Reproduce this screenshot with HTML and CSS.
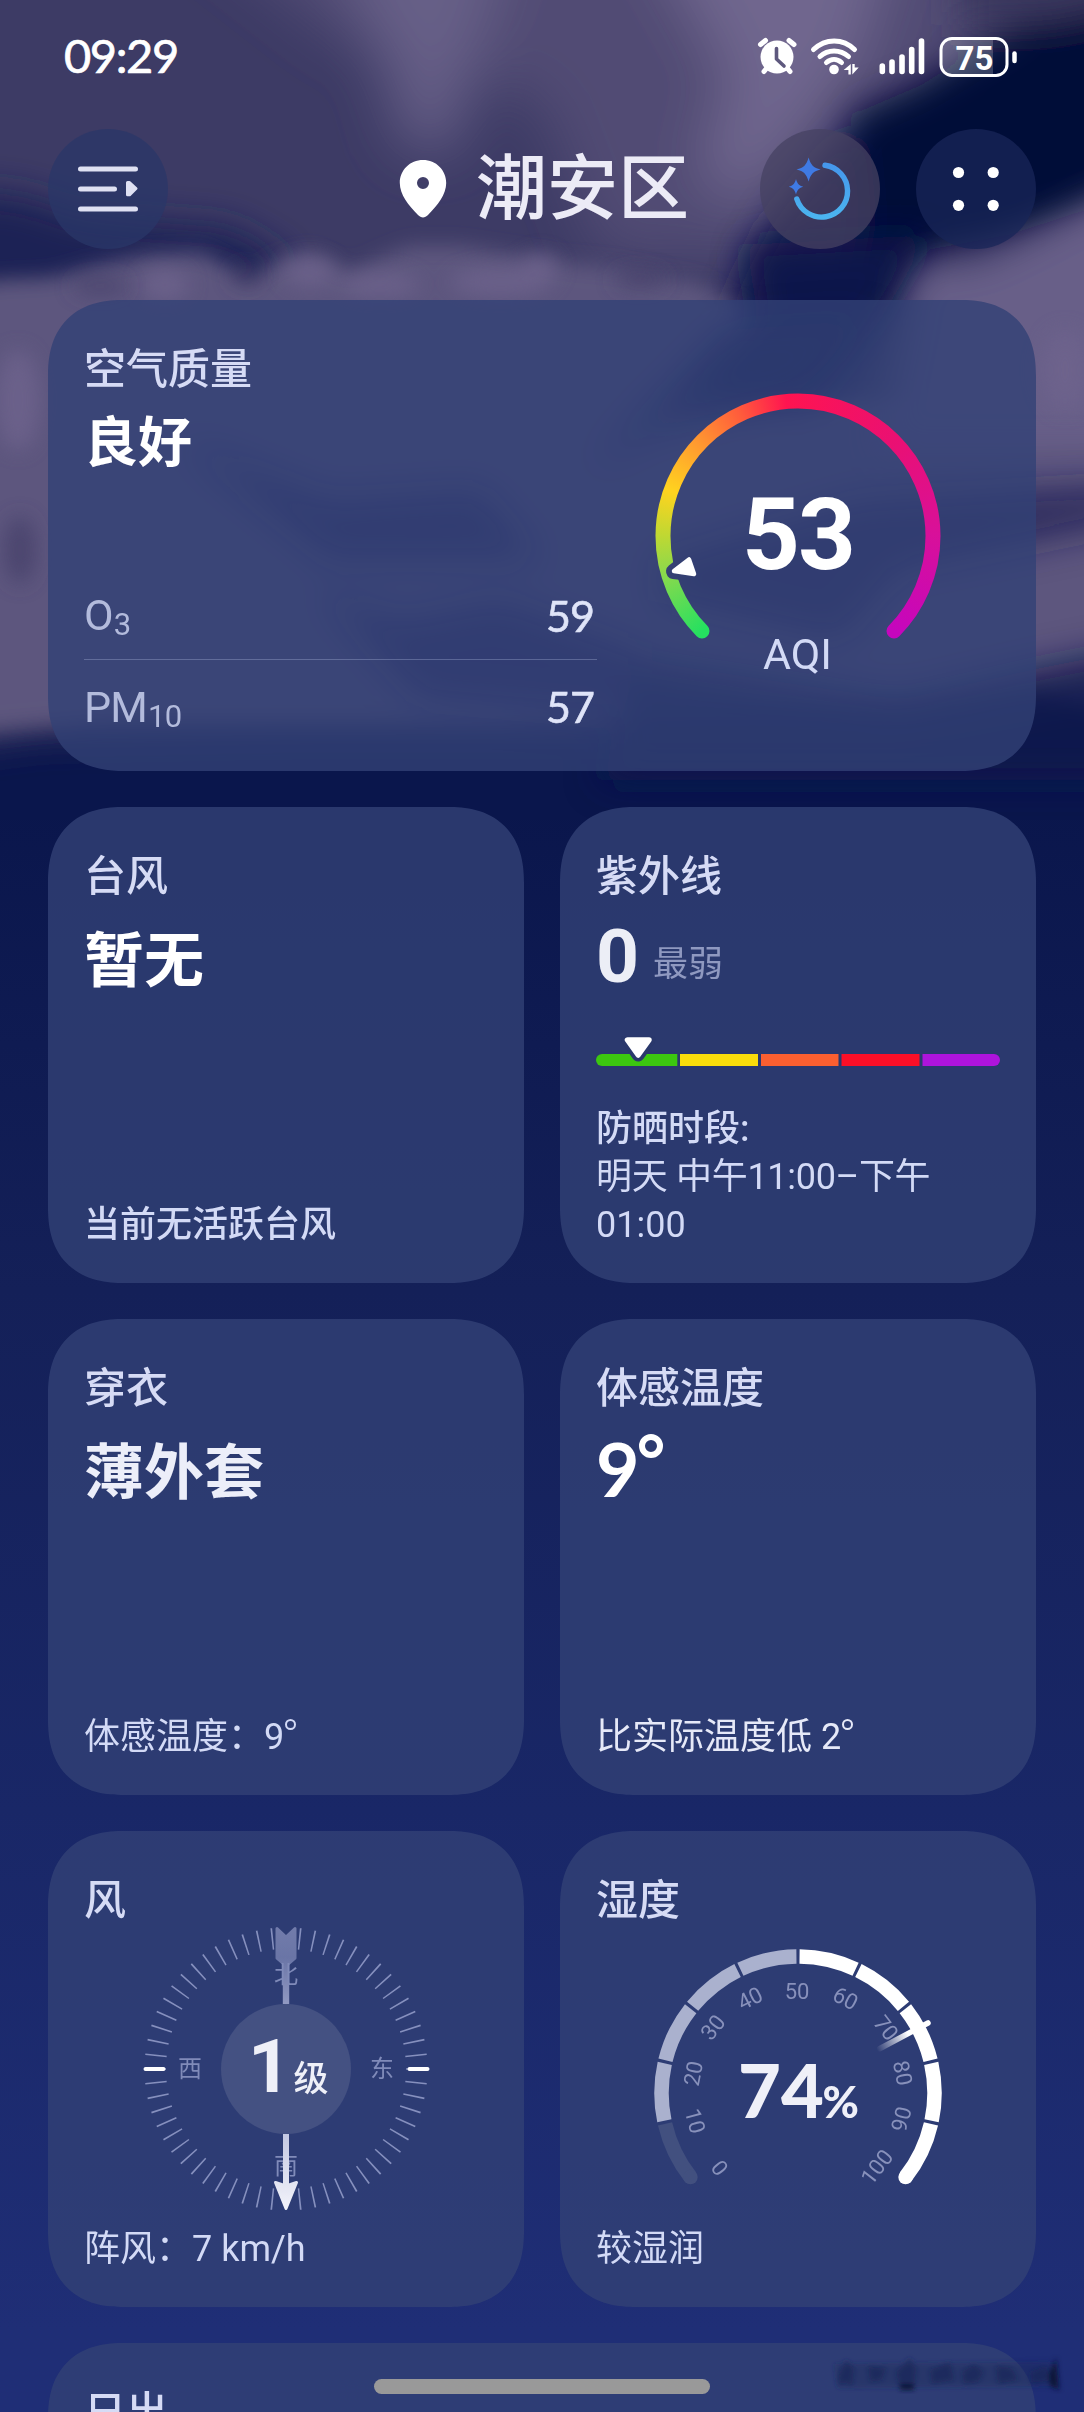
FILE: index.html
```html
<!DOCTYPE html>
<html lang="zh-CN">
<head>
<meta charset="utf-8">
<title>潮安区 天气</title>
<link rel="stylesheet" href="styles.css">
</head>
<body>
<div class="screen">
  <svg class="sky" viewBox="0 0 1084 820" width="1084" height="820" aria-hidden="true">
    <defs>
      <filter id="b18" filterUnits="userSpaceOnUse" x="-200" y="-200" width="1500" height="1200"><feGaussianBlur stdDeviation="18"/></filter>
      <filter id="b30" filterUnits="userSpaceOnUse" x="-200" y="-200" width="1500" height="1200"><feGaussianBlur stdDeviation="28"/></filter>
      <filter id="b12" filterUnits="userSpaceOnUse" x="-200" y="-200" width="1500" height="1200"><feGaussianBlur stdDeviation="10"/></filter>
    </defs>
    <rect width="1084" height="820" fill="#0a164c"/>
    <path filter="url(#b18)" fill="#3d3b65" d="M-100-100H1184V690L1060 700 900 730H300L40 735-100 755Z"/>
    <g filter="url(#b30)">
      <path fill="#555078" d="M160-100H1000V30L800 260H600L540 100 340 40Z" opacity=".8"/>
      <path fill="#6b638b" d="M330-80L520-80 480 40 455 150 405 150 380 60Z" opacity=".85"/>
      <path fill="#6f668e" d="M640-80L900-80 860 60 790 150 730 210 700 160 730 80Z"/>
    </g>
    <g filter="url(#b18)">
      <path fill="#1c2054" d="M-80 190L20 195 80 215 150 222 230 228 290 262 250 300-80 310Z"/>
      <path fill="#1c1c50" d="M770 225L850 130 900 300 720 330Z"/>
      <path fill="#010739" d="M1010 30L1100 0 1180-10V180L1010 235 930 250 890 300 840 320 860 220 850 115 920 85Z"/>
      <path fill="#3b385f" d="M960-80H1180V-10L1060 20 960 25Z"/>
    </g>
    <path filter="url(#b12)" fill="#5d567e" d="M-60 292L0 280 50 278 100 264 150 254 200 252 232 268 250 282 275 262 310 252 350 272 385 256 410 246 460 246 500 252 560 262 620 268 700 284 745 310 780 400 1160 400 1160 720 1030 690 900 700 500 720 100 720-60 735Z"/>
    <path filter="url(#b18)" fill="#10154c" d="M745 245L930 235 880 320 820 400 690 400 760 320Z"/>
    <path filter="url(#b18)" fill="#675e88" d="M905 330L915 268 980 262 1030 238 1160 170V450H880Z"/>
    <g filter="url(#b12)" fill="#6e648d" opacity=".8">
      <ellipse cx="165" cy="285" rx="24" ry="16"/><ellipse cx="310" cy="272" rx="26" ry="14"/><ellipse cx="380" cy="285" rx="40" ry="12"/><ellipse cx="500" cy="282" rx="50" ry="14"/><ellipse cx="540" cy="268" rx="18" ry="14"/><ellipse cx="18" cy="400" rx="22" ry="50"/><ellipse cx="1065" cy="370" rx="24" ry="40"/>
    </g>
    <g filter="url(#b12)" fill="#3f3b65" opacity=".6">
      <ellipse cx="100" cy="286" rx="28" ry="9"/><ellipse cx="245" cy="276" rx="14" ry="10"/><ellipse cx="640" cy="280" rx="26" ry="9"/><ellipse cx="20" cy="550" rx="16" ry="34"/>
    </g>
    <g filter="url(#b18)">
      <path fill="#10164f" d="M730 330L870 320 800 390 650 430 590 470Z" opacity=".8"/>
      <path fill="#1b1f58" d="M180 440L330 500 480 490 540 560 330 560Z" opacity=".7"/>
      <path fill="#171b52" d="M660 560L860 500 1180 480V512L900 570 840 640 660 600Z" opacity=".7"/>
      <path fill="#1b1f58" d="M320 590L400 620 500 600 640 650 640 720 420 700Z" opacity=".7"/>
      <path fill="#0b164c" d="M640 660L900 700 1030 670 1180 640V780H600Z" opacity=".85"/>
    </g>
  </svg>

  <header class="status">
    <span class="clock">09:29</span>
    <svg class="status-icons" width="262" height="42" viewBox="757 36 262 42" fill="none" stroke="#fff" stroke-linecap="round" stroke-linejoin="round">
      <path stroke-width="5" d="M760.5 44.5l5-4M794 44.5l-5-4M764 71.5l4-5M790 71.5l-4-5"/>
      <circle cx="777" cy="57" r="16.5" fill="#fff" stroke="none"/>
      <path stroke="#5e587e" stroke-width="3.6" d="M776.5 48.5v10.500l7.500 7"/>
      <path stroke-width="5" d="M813.500 49.500c12-11.500 29.500-11.500 41 0M820 56.500c8-7.500 20-7.500 28.500 0M826.500 62.500c4.500-4 10.500-4 15 0"/>
      <circle cx="834" cy="69.500" r="4.800" fill="#fff" stroke="none"/>
      <path fill="#fff" stroke="none" d="M850.800 64v10.500h-2.400v-4.500h-4.700zM852.300 74.500v-10.500h2.400v3.500h4z"/>
      <path stroke-width="5.600" d="M882.300 66v5.500M892 62v9.500M902 57v14.500M911.700 49.500v22M921.500 41v30.500"/>
      <path fill="#fff" fill-opacity=".2" stroke="none" d="M951 38.500h42v37h-42a10 10 0 0 1-10-10v-17a10 10 0 0 1 10-10z"/>
      <rect x="941" y="38.500" width="66" height="37" rx="11" stroke-width="3"/>
      <path stroke-width="4.500" d="M1014.500 53.500v7.500"/>
      <text class="battery" x="974.500" y="69.500" text-anchor="middle">75</text>
    </svg>
  </header>

  <nav class="topbar">
    <div class="round round-menu">
      <svg width="62" height="48" viewBox="77 165 62 48" fill="none" stroke="#dfe1f3" stroke-width="5" stroke-linecap="round">
        <path d="M80.500 169H135.500M80.500 189H114.500M80.500 209H135.500"/>
        <path fill="#dfe1f3" stroke-width="3" stroke-linejoin="round" d="M127.500 182.500h2l6.500 6-6.500 6.300h-2z"/>
      </svg>
    </div>
    <div class="place">
      <svg width="48" height="60" viewBox="399 160 48 60"><path fill="#fff" fill-rule="evenodd" d="M423 161c13 0 23.200 10 23.200 23 0 11.500-8.700 22.500-18.200 32-3.200 3.200-6.800 3.200-10 0-9.500-9.500-18.200-20.500-18.200-32 0-13 10.200-23 23.200-23zM423 178a6 6 0 1 0 0 12 6 6 0 0 0 0-12z"/></svg>
      <h1>潮安区</h1>
    </div>
    <div class="round round-ai">
      <svg width="64" height="68" viewBox="788 155 64 68">
        <defs><linearGradient id="ai" x1="0" y1="0" x2="0" y2="1"><stop offset="0" stop-color="#4597ec"/><stop offset="1" stop-color="#4bb4ef"/></linearGradient></defs>
        <path fill="none" stroke="url(#ai)" stroke-width="5.400" stroke-linecap="round" d="M825 165.300A26 26 0 1 1 796.800 199"/>
        <path fill="#3f7ae4" d="M808.600 157.500c2 7.500 5 10.200 12 12-7 1.800-10 4.500-12 12-2-7.500-5-10.200-12-12 7-1.800 10-4.500 12-12zM796 179c1.300 4.700 3 6.500 7.300 7.800-4.300 1.300-6 3-7.300 7.700-1.300-4.700-3-6.400-7.300-7.700 4.300-1.300 6-3.100 7.300-7.800z"/>
      </svg>
    </div>
    <div class="round round-more">
      <svg width="48" height="46" viewBox="-24 -23 48 46" fill="#fff"><circle cx="-17.500" cy="-16.500" r="5.600"/><circle cx="17.200" cy="-16.500" r="5.600"/><circle cx="-17.500" cy="16.300" r="5.600"/><circle cx="17.200" cy="16.300" r="5.600"/></svg>
    </div>
  </nav>

  <main class="cards">
    <section class="card air">
      <div class="air-info">
        <h2>空气质量</h2>
        <p class="value air-level">良好</p>
        <dl>
          <div class="row"><dt>O<sub>3</sub></dt><dd>59</dd></div>
          <div class="row"><dt>PM<sub>10</sub></dt><dd>57</dd></div>
        </dl>
      </div>
      <svg class="aqi" width="290" height="290" viewBox="-145 -145 290 290">
        <mask id="ring" maskUnits="userSpaceOnUse" x="-145" y="-145" width="290" height="290">
          <path d="M-96 96A135 135 0 1 1 96 96" fill="none" stroke="#fff" stroke-width="15" stroke-linecap="round"/>
          <path d="M-124.500 36.500L-108.500 24-103.500 39Z" fill="#000" stroke="#000" stroke-width="15" stroke-linejoin="round"/>
        </mask>
        <g mask="url(#ring)"><foreignObject x="-145" y="-145" width="290" height="290"><div class="spectrum"></div></foreignObject></g>
        <path d="M-124 36L-109 24.500-104 39Z" fill="#fff" stroke="#fff" stroke-width="4.500" stroke-linejoin="round"/>
        <text class="aqi-num" x="0" y="33.500" text-anchor="middle">53</text>
        <text class="aqi-label" x="-.5" y="133.500" text-anchor="middle">AQI</text>
      </svg>
    </section>

    <section class="card">
      <h2>台风</h2>
      <p class="value">暂无</p>
      <p class="note medium">当前无活跃台风</p>
    </section>

    <section class="card">
      <h2>紫外线</h2>
      <p class="value figure dim">0<span class="level">最弱</span></p>
      <svg class="uvbar" width="404" height="34" viewBox="0 0 404 34">
        <path fill="#3cc710" d="M6 18h75.300v12H6a6 6 0 0 1 0-12z"/>
        <path fill="#fadd0b" d="M84 18h78v12H84z"/><path fill="#fb5f30" d="M165 18h77.500v12H165z"/><path fill="#fb0f27" d="M245.500 18h78v12h-78z"/>
        <path fill="#ae14dc" d="M326.500 18H398a6 6 0 0 1 0 12h-71.500z"/>
        <path d="M31.500 4h21.500L42.200 19z" fill="#2a386c" stroke="#2a386c" stroke-width="13" stroke-linejoin="round"/>
        <path d="M31.500 4h21.500L42.200 19z" fill="#fff" stroke="#fff" stroke-width="5.500" stroke-linejoin="round"/>
      </svg>
      <p class="note"><span class="medium">防晒时段:</span><br><span class="period">明天 中午11:00–下午</span><br>01:00</p>
    </section>

    <section class="card">
      <h2>穿衣</h2>
      <p class="value soft">薄外套</p>
      <p class="note">体感温度：<span class="deg">9</span></p>
    </section>

    <section class="card">
      <h2>体感温度</h2>
      <p class="value figure lato"><span class="deg">9</span></p>
      <p class="note bright">比实际温度低 <span class="deg">2</span></p>
    </section>

    <section class="card">
      <h2>风</h2>
      <svg class="dial" width="404" height="290" viewBox="-202 -145 404 290">
        <defs>
          <linearGradient id="tail" gradientUnits="userSpaceOnUse" x1="0" y1="-142" x2="0" y2="-65"><stop offset="0" stop-color="#727cab"/><stop offset=".4" stop-color="#6a75a6"/><stop offset="1" stop-color="#9199c2"/></linearGradient>
          <linearGradient id="head" gradientUnits="userSpaceOnUse" x1="0" y1="65" x2="0" y2="142"><stop offset="0" stop-color="#c3c8e2"/><stop offset="1" stop-color="#f4f4fb"/></linearGradient>
        </defs>
        <g fill="none" stroke="#8690be" stroke-width="21.500">
          <path pathLength="174" stroke-dasharray="0 2.650 .7 2.650" d="M6.840-130.570A130.750 130.750 0 0 1 6.840 130.570"/>
          <path pathLength="174" stroke-dasharray="0 2.650 .7 2.650" d="M-6.840 130.570A130.750 130.750 0 0 1-6.840-130.570"/>
        </g>
        <path stroke="#fff" stroke-width="4" stroke-linecap="round" d="M-140.500 0h18M123.500 0h18"/>
        <circle r="65" fill="#445182"/>
        <path fill="url(#tail)" stroke="url(#tail)" stroke-width="3" stroke-linejoin="round" d="M-9-140.500L0-132 9-140.500V-111L2-105H-2L-9-111Z"/>
        <path fill="url(#tail)" d="M-3.200-106H3.200V-65H-3.200Z"/>
        <g class="compass" text-anchor="middle"><text x="0" y="-86.500">北</text><text x="0" y="104.500">南</text><text x="-96" y="8">西</text><text x="96" y="8">东</text></g>
        <path fill="url(#head)" d="M-3 65H3V116H-3Z"/>
        <path fill="url(#head)" stroke="url(#head)" stroke-width="3" stroke-linejoin="round" d="M-10.500 113.500L0 117 10.500 113.500 0 139.500Z"/>
        <text class="wind-num" x="-38" y="22.500">1</text>
        <text class="wind-unit" x="7.500" y="22">级</text>
      </svg>
      <p class="note">阵风：7 km/h</p>
    </section>

    <section class="card">
      <h2>湿度</h2>
      <svg class="hygro" width="404" height="290" viewBox="-202 -145 404 290">
        <defs><linearGradient id="needle" gradientUnits="userSpaceOnUse" x1="79" y1="-43" x2="110" y2="-59"><stop offset="0" stop-color="#fff" stop-opacity="0"/><stop offset="1" stop-color="#fff"/></linearGradient></defs>
        <g fill="none" stroke-width="14.500" transform="rotate(-218)">
          <circle r="136.500" pathLength="360" stroke="#42507f" stroke-dasharray="24.950 400"/>
          <circle r="136.500" pathLength="360" stroke="#aab1ce" stroke-dasharray="0 26.250 24.300 1.300 24.300 1.300 24.300 1.300 24.300 400"/>
          <circle r="136.500" pathLength="360" stroke="#fff" stroke-dasharray="0 128.650 24.300 1.300 24.300 1.300 24.300 1.300 24.300 1.300 24.950 400"/>
        </g>
        <circle cx="-107.560" cy="84.040" r="7.250" fill="#42507f"/><circle cx="107.560" cy="84.040" r="7.250" fill="#fff"/>
        <g class="scale" text-anchor="middle">
          <text transform="translate(-78.500 75) rotate(51)" y="7.500">0</text>
          <text transform="translate(-103 28) rotate(75)" y="7.500">10</text>
          <text transform="translate(-104.500-19.500) rotate(-79)" y="7.500">20</text>
          <text transform="translate(-85-65.500) rotate(-52)" y="7.500">30</text>
          <text transform="translate(-48-94.500) rotate(-27)" y="7.500">40</text>
          <text transform="translate(-1-102)" y="7.500">50</text>
          <text transform="translate(47.500-94.500) rotate(27)" y="7.500">60</text>
          <text transform="translate(88-65) rotate(52)" y="7.500">70</text>
          <text transform="translate(104.500-20) rotate(79)" y="7.500">80</text>
          <text transform="translate(103.500 26) rotate(-75)" y="7.500">90</text>
          <text transform="translate(79 74) rotate(-52)" y="7.500">100</text>
        </g>
        <path stroke="url(#needle)" stroke-width="5.500" stroke-linecap="round" d="M81.500-44.300L130-70"/>
        <text class="hum-num" x="-60" y="24.500">74</text>
        <text class="hum-unit" x="24.500" y="24.500">%</text>
      </svg>
      <p class="note">较湿润</p>
    </section>

    <section class="card sun"><h2>日出</h2></section>
  </main>

  <svg class="smudge" width="246" height="44" viewBox="826 2350 246 44" aria-hidden="true">
    <filter id="s3" x="-20%" y="-20%" width="140%" height="140%"><feGaussianBlur stdDeviation="2.500"/></filter>
    <g filter="url(#s3)" fill="#1d2857">
      <path opacity=".35" d="M834 2364L1050 2362 1056 2386 838 2388Z"/>
      <path opacity=".7" d="M838 2376l8-16 8 8-2 18-8-4-6 4zM868 2366l18 2-4 12-12 2zM896 2372l14-14 6 10-2 20h-14zM930 2370l20-8 4 18-22 4zM962 2372l12-8 10 8-6 10-14 2zM996 2366l16 2 6 12-20 4zM1030 2372l16-6 4 14-18 4z"/>
      <path fill="#0c1437" d="M1049 2374l7-16 3 32-9-4zM900 2384h14v6h-14z"/>
    </g>
  </svg>
  <div class="homebar"></div>
</div>
</body>
</html>
```
FILE: styles.css
```css
* { box-sizing: border-box; margin: 0; padding: 0; }

body {
  width: 1084px;
  font-family: Roboto, "Noto Sans CJK SC", sans-serif;
  color: #fff;
  background: #0a164c;
}

.screen {
  position: relative;
  width: 1084px;
  height: 2412px;
  overflow: hidden;
  background: linear-gradient(#0a164c 800px, #142058 1290px, #192767 1810px, #1f2e76 2330px);
}

.sky { position: absolute; inset: 0 auto auto 0; }
.status, .topbar, .cards { position: relative; display: flex; }

/* status bar */
.status {
  height: 128px;
  padding: 35px 65px 0 64px;
  justify-content: space-between;
  align-items: flex-start;
}
.status-icons { margin-top: 1px; }
.clock {
  font: 400 47px/40px Lato, Roboto, sans-serif;
  letter-spacing: -1.4px;
  -webkit-text-stroke: .7px #fff;
}
.battery { font: 700 33px Roboto, sans-serif; fill: #fff; stroke: none; }

/* title bar */
.topbar { height: 121px; padding: 0 48px; align-items: center; }
.round {
  display: flex;
  flex: none;
  width: 120px;
  height: 120px;
  border-radius: 50%;
  align-items: center;
  justify-content: center;
}
.round-menu { background: rgba(42, 55, 104, .75); }
.round-ai { background: rgba(70, 66, 98, .75); margin-right: 36px; }
.round-more { background: rgba(24, 38, 88, .75); }
.place { display: flex; flex: 1; align-items: center; padding-left: 231px; gap: 29px; }
.place h1 { font-size: 71px; line-height: 84px; font-weight: 500; color: #ecebf6; white-space: nowrap; }

/* cards */
.cards {
  display: grid;
  grid-template-columns: 476px 476px;
  grid-template-rows: 471px 476px 476px 476px 476px;
  gap: 36px;
  padding: 51px 48px 0;
}
.card {
  display: flex;
  flex-direction: column;
  padding: 38px 36px 34px;
  border-radius: 76px;
  corner-shape: superellipse(1.25);
  background: rgba(50, 65, 117, .8);
}
.card h2 { font-size: 42px; line-height: 64px; font-weight: 500; color: #d6dbf5; }
.value { font-size: 60px; line-height: 90px; margin-top: 8px; font-weight: 700; }
.soft { color: #eceef9; }
.note { margin-top: auto; font-size: 36px; line-height: 48px; color: #d3daf6; }
.period { letter-spacing: -.3px; }
.medium { font-weight: 500; }
.bright { color: #e6e9f8; }
.figure { font-size: 75px; margin-top: 2px; }
.dim { color: #eceef6; }
.lato { font-family: Lato, Roboto, sans-serif; }

/* temperature figure with its raised degree ring */
.deg::after {
  content: "";
  box-sizing: border-box;
  display: inline-block;
  width: .32em;
  height: .32em;
  margin-left: .02em;
  border: .07em solid currentColor;
  border-radius: 50%;
  vertical-align: .52em;
}
.figure .deg::after { margin-left: -.01em; border-width: 6px; }

.air, .sun { grid-column: 1 / -1; }
.air { flex-direction: row; padding: 38px 93px 21px 36px; justify-content: space-between; }
.air-info { display: flex; flex-direction: column; width: 513px; }
.air-level { font-size: 54px; line-height: 70px; margin-top: 7px; }
.air dl { margin-top: auto; }
.row { display: flex; justify-content: space-between; height: 91px; padding: 0 3px 0 0; font-size: 43px; line-height: 95px; }
.row + .row { border-top: 1px solid rgba(190, 200, 235, .3); line-height: 94px; }
.row dt { color: #b3bbdc; letter-spacing: -.8px; }
.row sub { font-size: 31px; line-height: 0; vertical-align: -5px; margin-left: 1px; }
.row dd { font-family: Lato, Roboto, sans-serif; color: #dfe4f8; letter-spacing: -1px; -webkit-text-stroke: .6px #dfe4f8; }

.aqi { margin-top: 52px; overflow: visible; }
.spectrum {
  width: 290px;
  height: 290px;
  background: conic-gradient(from 180deg, #25e060 45deg, #8bd94c 74deg, #c0d832 90deg, #ffd31f 109deg,
    #ff9a30 132deg, #ff5a3c 155deg, #ff1450 175deg, #ea1072 225deg, #d8109a 270deg, #c506bd 315deg);
}
.aqi text { fill: #fff; }
.aqi .aqi-num { font: 700 101px Roboto, sans-serif; letter-spacing: -2px; }
.aqi .aqi-label { font: 400 43px Roboto, sans-serif; fill: #d3daf6; }

.level { font-size: 35px; line-height: 35px; font-weight: 400; color: #8f99c0; margin-left: 14px; vertical-align: 6px; }
.uvbar { flex: none; margin-top: 35px; }

.dial, .hygro { flex: none; margin-top: -9px; }
.hygro { margin-top: 15px; margin-bottom: -40px; }
.compass { font: 400 24px "Noto Sans CJK SC", sans-serif; fill: #808bb9; }
.wind-num { font: 700 75px Roboto, sans-serif; fill: #eff0f8; }
.wind-unit { font: 500 35px "Noto Sans CJK SC", sans-serif; fill: #eff0f8; }
.scale { font: 400 22px Roboto, sans-serif; fill: #8891bb; }
.hum-num { font: 900 74px Lato, Roboto, sans-serif; fill: #eff0f8; }
.hum-unit { font: 900 44px Lato, Roboto, sans-serif; fill: #eff0f8; }

/* overlays at the bottom edge */
.smudge { position: absolute; left: 826px; top: 2350px; }
.homebar {
  position: absolute;
  left: 374px;
  bottom: 18px;
  width: 336px;
  height: 15px;
  border-radius: 8px;
  background: #999;
}
```
